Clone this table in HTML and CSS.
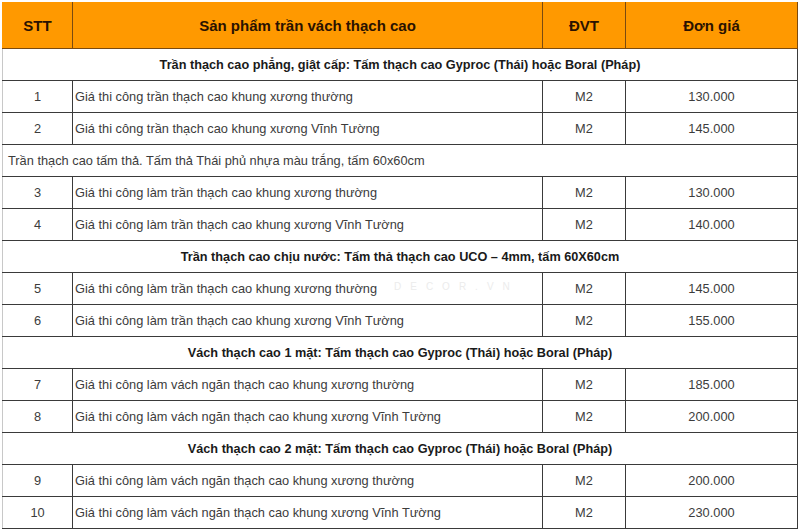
FILE: index.html
```html
<!DOCTYPE html>
<html lang="vi">
<head>
<meta charset="utf-8">
<title>Bảng giá trần vách thạch cao</title>
<link rel="stylesheet" href="styles.css">
</head>
<body>
<div class="wrap">
<table class="price">
  <colgroup>
    <col class="c-stt"><col class="c-name"><col class="c-unit"><col class="c-price">
  </colgroup>
  <thead>
    <tr><th>STT</th><th>Sản phẩm trần vách thạch cao</th><th>ĐVT</th><th>Đơn giá</th></tr>
  </thead>
  <tbody>
    <tr class="sec"><td colspan="4">Trần thạch cao phẳng, giật cấp: Tấm thạch cao Gyproc (Thái) hoặc Boral (Pháp)</td></tr>
    <tr><td class="num">1</td><td class="name">Giá thi công trần thạch cao khung xương thường</td><td class="num">M2</td><td class="num">130.000</td></tr>
    <tr><td class="num">2</td><td class="name">Giá thi công trần thạch cao khung xương Vĩnh Tường</td><td class="num">M2</td><td class="num">145.000</td></tr>
    <tr class="sec plain"><td colspan="4">Trần thạch cao tấm thả. Tấm thả Thái phủ nhựa màu trắng, tấm 60x60cm</td></tr>
    <tr><td class="num">3</td><td class="name">Giá thi công làm trần thạch cao khung xương thường</td><td class="num">M2</td><td class="num">130.000</td></tr>
    <tr><td class="num">4</td><td class="name">Giá thi công làm trần thạch cao khung xương Vĩnh Tường</td><td class="num">M2</td><td class="num">140.000</td></tr>
    <tr class="sec"><td colspan="4">Trần thạch cao chịu nước: Tấm thả thạch cao UCO – 4mm, tấm 60X60cm</td></tr>
    <tr><td class="num">5</td><td class="name">Giá thi công làm trần thạch cao khung xương thường</td><td class="num">M2</td><td class="num">145.000</td></tr>
    <tr><td class="num">6</td><td class="name">Giá thi công làm trần thạch cao khung xương Vĩnh Tường</td><td class="num">M2</td><td class="num">155.000</td></tr>
    <tr class="sec"><td colspan="4">Vách thạch cao 1 mặt: Tấm thạch cao Gyproc (Thái) hoặc Boral (Pháp)</td></tr>
    <tr><td class="num">7</td><td class="name">Giá thi công làm vách ngăn thạch cao khung xương thường</td><td class="num">M2</td><td class="num">185.000</td></tr>
    <tr><td class="num">8</td><td class="name">Giá thi công làm vách ngăn thạch cao khung xương Vĩnh Tường</td><td class="num">M2</td><td class="num">200.000</td></tr>
    <tr class="sec"><td colspan="4">Vách thạch cao 2 mặt: Tấm thạch cao Gyproc (Thái) hoặc Boral (Pháp)</td></tr>
    <tr><td class="num">9</td><td class="name">Giá thi công làm vách ngăn thạch cao khung xương thường</td><td class="num">M2</td><td class="num">200.000</td></tr>
    <tr><td class="num">10</td><td class="name">Giá thi công làm vách ngăn thạch cao khung xương Vĩnh Tường</td><td class="num">M2</td><td class="num">230.000</td></tr>
  </tbody>
</table>
<div class="mark">DECOR.VN</div>
</div>
</body>
</html>
```

FILE: styles.css
```css
html, body {
  margin: 0;
  padding: 0;
  background: #ffffff;
}
body {
  font-family: "Liberation Sans", Arial, sans-serif;
  color: #333333;
}
.wrap {
  position: relative;
  padding: 2px 3px 0 2px;
}
.price {
  width: 795px;
  border-collapse: collapse;
  table-layout: fixed;
}
.c-stt { width: 70px; }
.c-name { width: 470px; }
.c-unit { width: 83px; }
.c-price { width: 172px; }
.price th {
  background: #ff9900;
  color: #2a1200;
  font-size: 15px;
  font-weight: bold;
  height: 45px;
  padding: 0;
  border: 1px solid #7a4a10;
  border-top-color: #ff9900;
  text-align: center;
}
.price th:first-child { border-left-color: #ff9900; }
.price td {
  height: 31px;
  padding: 0 2px;
  border: 1px solid #3a3a3a;
  font-size: 12.8px;
  color: #3c3c3c;
  white-space: nowrap;
}
.price td.num { text-align: center; }
.price td.name { text-align: left; }
.price tr td:first-child { border-left-color: #c8c8c8; }
.price tr.sec td {
  text-align: center;
  font-weight: bold;
  font-size: 12.7px;
  color: #1a1a1a;
}
.price tr.plain td {
  text-align: left;
  font-weight: normal;
  font-size: 12.8px;
  padding-left: 5px;
  color: #3c3c3c;
}
.mark {
  position: absolute;
  left: 394px;
  top: 281px;
  font-size: 10px;
  letter-spacing: 9px;
  color: #ececec;
  pointer-events: none;
}
```
